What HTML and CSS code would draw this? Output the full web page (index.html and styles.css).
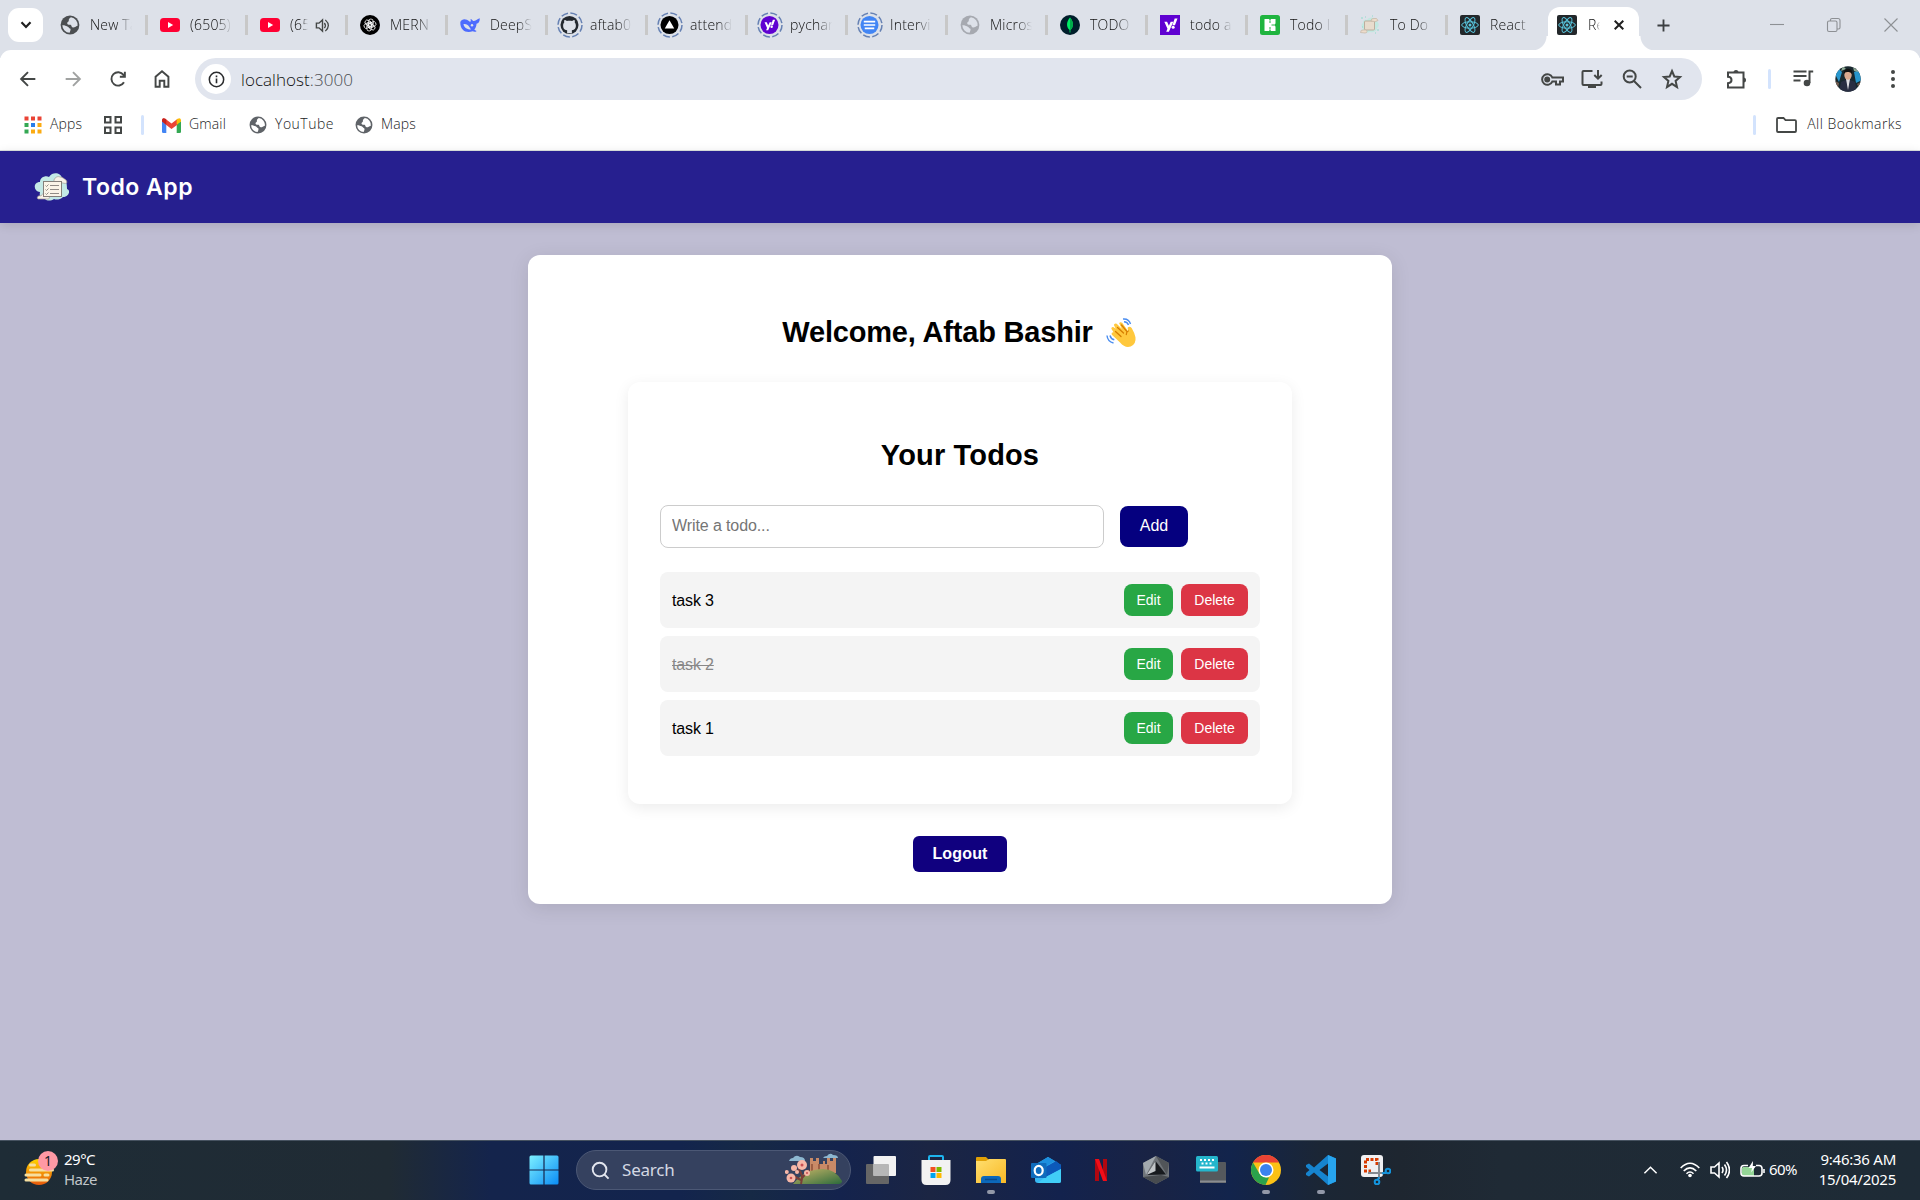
FILE: index.html
```html
<!DOCTYPE html>
<html lang="en">
<head>
<meta charset="utf-8">
<title>Todo App</title>
<link rel="stylesheet" href="styles.css">
</head>
<body>
<svg class="sprite" aria-hidden="true">
  <defs>
    <linearGradient id="g-win" x1="0" y1="0" x2="1" y2="1"><stop offset="0" stop-color="#7df0ff"/><stop offset="1" stop-color="#0a8cf5"/></linearGradient>
    <linearGradient id="g-sun" x1="0" y1="0" x2="0" y2="1"><stop offset="0" stop-color="#ffd400"/><stop offset="1" stop-color="#e8590c"/></linearGradient>
    <linearGradient id="g-hill" x1="0" y1="0" x2="1" y2="1"><stop offset="0" stop-color="#c9b567"/><stop offset="1" stop-color="#2c6b3c"/></linearGradient>
    <linearGradient id="g-folder" x1="0" y1="0" x2="1" y2="1"><stop offset="0" stop-color="#ffdf70"/><stop offset="1" stop-color="#f9b925"/></linearGradient>
    <symbol id="globe" viewBox="0 0 20 20"><circle cx="10" cy="10" r="9.4" fill="currentColor"/><path d="M11 2.2c-1.6 1-2.5 2-2.2 3.4.3 1.2-1.6 1.300-1.6 2.700 0 1 1.200 1.500 2.800 1.500 2 0 1 2.400 3 2.700 1.500.2 2.500-.9 4.600-1.700A7.700 7.700 0 0 0 11 2.200zM2.300 10.300c1.700-.4 3.500.5 5 1.200 1.600.6 1.400 1.700 2.800 2 1 .3.300 2.500-.5 4.200a7.700 7.700 0 0 1-7.300-7.400z" fill="var(--cut,#dde1e9)"/></symbol>
    <symbol id="youtube" viewBox="0 0 20 20"><rect y="3" width="20" height="14" rx="3.500" fill="#ff0033"/><path d="M8 7l5.200 3L8 13z" fill="#fff"/></symbol>
    <symbol id="openai" viewBox="0 0 20 20"><circle cx="10" cy="10" r="10" fill="#000"/><g fill="none" stroke="#fff" stroke-width=".8"><rect x="8.600" y="4" width="4.600" height="8" rx="2.300"/><rect x="8.600" y="4" width="4.600" height="8" rx="2.300" transform="rotate(60 10 10)"/><rect x="8.600" y="4" width="4.600" height="8" rx="2.300" transform="rotate(120 10 10)"/><rect x="8.600" y="4" width="4.600" height="8" rx="2.300" transform="rotate(180 10 10)"/><rect x="8.600" y="4" width="4.600" height="8" rx="2.300" transform="rotate(240 10 10)"/><rect x="8.600" y="4" width="4.600" height="8" rx="2.300" transform="rotate(300 10 10)"/></g></symbol>
    <symbol id="deepseek" viewBox="0 0 20 20"><path d="M.3 7C2 3.500 6 3.500 9.500 6.500c1.200.8 1.600-.3 1-2.500 1.400.2 2 1.500 2.800 2C15 6.500 17 4 19.800 3.200c0 3.500-1.300 5-3.300 5.500 0 2.500-1 4.500-2.200 5.700.8 1 1.800 1.200 2.300 1.500-1 1.300-3 .8-4 .3C7 18.500 0 16 .3 7z" fill="#4d6bfe"/><path d="M3.500 9c2.500-.5 4.500.8 5.500 2.500l2 3C7.500 14.500 4 13 3.500 9z" fill="#dde1e9"/><circle cx="12" cy="10.200" r="1.200" fill="#dde1e9"/></symbol>
    <symbol id="ring" viewBox="0 0 26 26"><circle cx="13" cy="13" r="12" fill="none" stroke="#6681b3" stroke-width="1.500" stroke-dasharray="7 2.425"/></symbol>
    <symbol id="github" viewBox="0 0 20 20"><circle cx="10" cy="10" r="9.500" fill="#24292f"/><path d="M7.500 18.800v-3.300c-3.300-.2-4.200-2.400-4.200-5 0-1.500.5-2.400 1.200-3.100-.3-1-.1-2 .2-2.600 1 0 1.900.5 2.500 1.100 1.800-.5 3.900-.5 5.600 0 .700-.6 1.600-1.100 2.500-1.100.4.700.5 1.700.2 2.600.8.800 1.200 1.800 1.200 3.100 0 2.600-1 4.800-4.200 5v3.300z" fill="#dde1e9"/></symbol>
    <symbol id="vercel" viewBox="0 0 20 20"><circle cx="10" cy="10" r="9.500" fill="#000"/><path d="M10 5l5 8.800H5z" fill="#fff"/></symbol>
    <symbol id="yahoo-mark" viewBox="0 0 20 20"><path d="M3.500 7h2.900l1.900 4.400L10.200 7H13l-4.700 10.500H5.500l1.300-2.900zM14.400 3.800h3l-2.700 7h-2.700z" fill="#fff"/><circle cx="12.800" cy="13" r="1.600" fill="#fff"/></symbol>
    <symbol id="yahoo-round" viewBox="0 0 20 20"><circle cx="10" cy="10" r="9.500" fill="#5f01d1"/><use href="#yahoo-mark" x="2" y="1.500" width="16" height="16"/></symbol>
    <symbol id="yahoo" viewBox="0 0 20 20"><rect width="20" height="20" fill="#5f01d1"/><use href="#yahoo-mark" x="1" y="0" width="19" height="19"/></symbol>
    <symbol id="docs" viewBox="0 0 20 20"><circle cx="10" cy="10" r="9.500" fill="#4285f4"/><path d="M4 6.500h12M4 10h12M5 13.500h10" stroke="#fff" stroke-width="1.800"/></symbol>
    <symbol id="mongo" viewBox="0 0 20 20"><circle cx="10" cy="10" r="10" fill="#001e2b"/><path d="M10 2.500c3.500 4.300 4.200 8.800.4 12.600v2.400h-.8v-2.400C5.800 11.300 6.500 6.800 10 2.500z" fill="#00ed64"/><path d="M10 2.500c3.500 4.300 4.200 8.800.4 12.600H10z" fill="#00ac4b"/></symbol>
    <symbol id="flower" viewBox="0 0 20 20"><rect width="20" height="20" rx="2.500" fill="#1fb43f"/><path d="M4.500 4H9l1 1.500L11 4h4.500v4.500L14 10l1.500 1.500V16H11l-1-1.500L9 16H4.500z" fill="#fff"/><path d="M10 5.500V8M10 12v2.500M11.500 10H14" stroke="#1fb43f" stroke-width="1"/></symbol>
    <symbol id="todo-faint" viewBox="0 0 20 20"><path d="M3 8c0-4 3-4 4-3 2-4 9-3 9 1 3 1 4 5 1 7 0 4-5 5-7 4-4 2-9-1-7-4-2-1-2-4 0-5z" fill="#c3e8e1"/><path d="M1 3h2M5 2h1M2 12h1M17 15h2M15 18h1M12 1h1" stroke="#8fdccb" stroke-width="1"/><rect x="4.500" y="6" width="10" height="9" rx="1" fill="#e8dccd" stroke="#bcae9e"/><path d="M11 6q0-3 3-2.500 3-1 4 2-2 2-7 .5zM.5 17.500q0-3 3-2.500 3-1 3.500 1.500 0 1.500-2 1.500z" fill="#eddccb" stroke="#c3b5a4" stroke-width=".7"/></symbol>
    <symbol id="react" viewBox="0 0 20 20"><rect width="20" height="20" rx="2" fill="#23272a"/><g fill="none" stroke="#58c4dc" stroke-width="1"><ellipse cx="10" cy="10" rx="8.300" ry="3.200"/><ellipse cx="10" cy="10" rx="8.300" ry="3.200" transform="rotate(60 10 10)"/><ellipse cx="10" cy="10" rx="8.300" ry="3.200" transform="rotate(120 10 10)"/></g><circle cx="10" cy="10" r="1.500" fill="#58c4dc"/></symbol>
    <symbol id="todo-logo" viewBox="0 0 36 30"><path d="M6 20C-1 19-1 10 6 10c0-5 6-7 9-5 4-6 12-4 13 1 5 1 5 8 5 11 4 1 2 8-4 8-3 3-7 3-9 2-3 2-7 2-9 0-4 0-6-3-5-7z" fill="#c3e9e6"/><path d="M20 8c1-3 4-4 6-3 3 0 4 2 6 3 2 3 0 4-3 3l-9-1zM4 27c-2-2 1-4 3-3 1-3 5-3 6 0 3 0 3 3 1 3z" fill="#f7f2e8" stroke="#a49b92" stroke-width=".7"/><rect x="9.500" y="9.500" width="18" height="15" fill="#fbf5e8" stroke="#85807a"/><path d="M11.500 13.500l1 1 2-2M11.500 17.500l1 1 2-2M11.500 21.500l1 1 2-2M16 13.500h9M16 17.500h9M16 21.500h9" fill="none" stroke="#85807a" stroke-width=".9"/></symbol>
    <symbol id="i-restore" viewBox="0 0 16 16"><rect x="1.500" y="4" width="9.500" height="10.500" rx="1.500"/><path d="M4.500 4V2.800Q4.500 1.500 6 1.500h6q2 0 2 2v7q0 1.500-1.500 1.500H11"/></symbol>
  </defs>
</svg>

<div class="browser">
  <header class="tabstrip">
    <button class="tab-search"><svg width="12" height="8" viewBox="0 0 12 8"><path d="M1.500 1.300L6 6l4.500-4.700" fill="none" stroke="#1f1f1f" stroke-width="2.200"/></svg></button>
    <nav class="tabs">
      <div class="tab"><svg class="fav dark"><use href="#globe"/></svg><span>New Tab</span></div>
      <div class="tab"><svg class="fav"><use href="#youtube"/></svg><span>(6505)</span></div>
      <div class="tab audio"><svg class="fav"><use href="#youtube"/></svg><span>(6505)</span><svg class="sound" viewBox="0 0 16 16"><path d="M1.500 5.500h2.700L8 2v12l-3.800-3.500H1.500z" fill="none" stroke="#444746" stroke-width="1.500"/><path d="M10 5.300q2.200 2.700 0 5.400M11 2q6.500 6 0 12" fill="none" stroke="#444746" stroke-width="1.400"/></svg></div>
      <div class="tab"><svg class="fav"><use href="#openai"/></svg><span>MERN</span></div>
      <div class="tab"><svg class="fav"><use href="#deepseek"/></svg><span>DeepS</span></div>
      <div class="tab asleep"><svg class="fav"><use href="#github"/></svg><svg class="ring"><use href="#ring"/></svg><span>aftab0</span></div>
      <div class="tab asleep"><svg class="fav"><use href="#vercel"/></svg><svg class="ring"><use href="#ring"/></svg><span>attend</span></div>
      <div class="tab asleep"><svg class="fav"><use href="#yahoo-round"/></svg><svg class="ring"><use href="#ring"/></svg><span>pychar</span></div>
      <div class="tab asleep"><svg class="fav"><use href="#docs"/></svg><svg class="ring"><use href="#ring"/></svg><span>Intervi</span></div>
      <div class="tab"><svg class="fav pale"><use href="#globe"/></svg><span>Micros</span></div>
      <div class="tab"><svg class="fav"><use href="#mongo"/></svg><span>TODO</span></div>
      <div class="tab"><svg class="fav"><use href="#yahoo"/></svg><span>todo a</span></div>
      <div class="tab"><svg class="fav"><use href="#flower"/></svg><span>Todo l</span></div>
      <div class="tab"><svg class="fav"><use href="#todo-faint"/></svg><span>To Do</span></div>
      <div class="tab last"><svg class="fav"><use href="#react"/></svg><span>React</span></div>
      <div class="tab active"><svg class="fav"><use href="#react"/></svg><span>Re</span><svg class="close" viewBox="0 0 10 10"><path d="M.7.7l8.600 8.600M9.300.7L.7 9.300" stroke="#1f1f1f" stroke-width="2"/></svg></div>
    </nav>
    <svg class="new-tab" viewBox="0 0 14 14"><path d="M7 .5v13M.5 7h13" stroke="#3c3f42" stroke-width="2"/></svg>
    <div class="window-controls">
      <svg viewBox="0 0 16 16"><path d="M1 7.500h14"/></svg>
      <svg viewBox="0 0 16 16"><use href="#i-restore"/></svg>
      <svg viewBox="0 0 16 16"><path d="M1.500 1.500l13 13M14.500 1.500l-13 13"/></svg>
    </div>
  </header>

  <div class="toolbar">
    <div class="nav-buttons">
      <svg viewBox="0 0 24 24"><path d="M20 12H5M12 4.500L4.500 12l7.500 7.500"/></svg>
      <svg class="off" viewBox="0 0 24 24"><path d="M4 12h15M12 4.500l7.500 7.500-7.500 7.500"/></svg>
      <svg viewBox="0 0 24 24"><path d="M18.500 15.500A7.300 7.300 0 1 1 18 7.500l1 1.500M19.500 4v5.500H14"/></svg>
      <svg viewBox="0 0 24 24"><path d="M5 20.500V9.500L12 3.500l7 6v11h-4.500v-6.500h-5v6.500z"/></svg>
    </div>
    <div class="omnibox">
      <span class="site-info"><svg viewBox="0 0 18 18"><circle cx="9" cy="9" r="7.600" fill="none" stroke="#2a2b2d" stroke-width="1.600"/><path d="M9 8v5M9 4.800v1.800" stroke="#2a2b2d" stroke-width="1.700"/></svg></span>
      <span class="url">localhost<i>:3000</i></span>
      <div class="omni-actions">
        <svg viewBox="0 0 24 24"><path d="M12.300 10.400A5.300 5.300 0 1 0 12.300 14.600H16v3h4v-3h3v-4.200z"/><circle cx="7.200" cy="12.500" r="2" fill="#444746"/></svg>
        <svg viewBox="0 0 24 24"><path d="M12.500 4H3.500Q2.500 4 2.500 5v12q0 1 1 1h17q1 0 1-1v-2.500M18 3v8M14.300 8l3.700 3.700L21.700 8"/><path d="M8 18h8v3H8z" fill="#444746" stroke="none"/></svg>
        <svg viewBox="0 0 24 24"><circle cx="9.700" cy="9.500" r="6"/><path d="M14 14l7 7M6.700 9.500h6"/></svg>
        <svg viewBox="0 0 24 24"><path d="M12 4l2.300 5.500 5.700.5-4.400 3.900 1.400 6.100L12 16.800 7 20l1.400-6.100L4 10l5.700-.5z"/></svg>
      </div>
    </div>
    <svg class="ext" viewBox="0 0 24 24"><path d="M4 5.500h15.500v15H4v-4.300q3.500-.2 3.500-3.200T4 9.800z"/><path d="M9.500 5.500a2.500 2.500 0 0 1 5 0zM19.500 10.500a2.300 2.300 0 0 1 0 5z" fill="#444746" stroke="none"/></svg>
    <span class="divider"></span>
    <svg class="media" viewBox="0 0 24 24"><path d="M2.500 4.500h13M2.500 9h13M2.500 13.500h7M18.500 16V4.500h3.700"/><circle cx="16" cy="16" r="3.300" fill="#444746" stroke="none"/></svg>
    <svg class="avatar" viewBox="0 0 26 26"><clipPath id="av"><circle cx="13" cy="13" r="12.700"/></clipPath><g clip-path="url(#av)"><path fill="#19282e" d="M0 0h26v26H0z"/><path d="M0 8l4-5 3 3-3 10zM19 6l5-2 3 10-6 3z" fill="#2897cd"/><path d="M8 0l3 3-5 2zM18 1l6 5-5-1z" fill="#8fab95"/><path d="M0 15l4 2-1 5zM26 16l-4 2 2 4z" fill="#755d50"/><path d="M4 26l2-10 7-3 7 3 2 10z" fill="#292e42"/><path d="M11 13h4l-2 11z" fill="#e0e0e4"/><ellipse cx="13" cy="9" rx="3.700" ry="4.800" fill="#dba98e"/><path d="M9 8Q8 3 13 2.700 18 3 17 8 15 5.500 13 6 10 5.500 9 8z" fill="#111"/></g></svg>
    <svg class="more" viewBox="0 0 6 20"><circle cx="3" cy="3" r="2"/><circle cx="3" cy="10" r="2"/><circle cx="3" cy="17" r="2"/></svg>
  </div>

  <div class="bookmarks">
    <a class="apps"><svg width="18" height="18" viewBox="0 0 18 18"><path d="M.5.5h4v4h-4zM7 .5h4v4H7zM13.500.5h4v4h-4z" fill="#ea4335"/><path d="M.5 7h4v4h-4zM.5 13.500h4v4h-4z" fill="#34a853"/><path d="M7 7h4v4H7z" fill="#2a7de9"/><path d="M13.500 7h4v4h-4zM7 13.500h4v4H7zM13.500 13.500h4v4h-4z" fill="#fbab12"/></svg><span>Apps</span></a>
    <svg class="grid" viewBox="0 0 18 18"><path d="M1 1h5.500v5.500H1zM11.500 1H17v5.500h-5.500zM1 11.500h5.500V17H1zM11.500 11.500H17V17h-5.500z" fill="none" stroke="#444746" stroke-width="2"/></svg>
    <span class="divider"></span>
    <a class="gmail"><svg width="19" height="15" viewBox="0 0 19 15"><path d="M0 3v10.700Q0 15 1.300 15H4.300V6z" fill="#4285f4"/><path d="M19 3v10.700q0 1.300-1.300 1.300h-3V6z" fill="#34a853"/><path d="M0 3.200V2Q.5-.8 3.300.7L9.500 5.500 15.700.7v5.700L9.500 11 4.300 7z" fill="#ea4335"/><path d="M14.700 1.500l1-.8Q18.500-.8 19 2v1.500l-4.300 3.300z" fill="#fbbc04"/><path d="M0 2Q.5-.8 3.300.7l1 .8v5.300L0 3.500z" fill="#c5221f"/></svg><span>Gmail</span></a>
    <a class="yt"><svg width="18" height="18"><use href="#globe"/></svg><span>YouTube</span></a>
    <a class="maps"><svg width="18" height="18"><use href="#globe"/></svg><span>Maps</span></a>
    <div class="all"><span class="divider"></span><svg width="21" height="16" viewBox="0 0 21 16"><path d="M1 14V2q0-1 1-1h5.500l2 2.200H19q1 0 1 1V14q0 1-1 1H2q-1 0-1-1z" fill="none" stroke="#444746" stroke-width="1.800"/></svg><span class="label">All Bookmarks</span></div>
  </div>
</div>

<main class="page">
  <header class="navbar"><svg width="36" height="30"><use href="#todo-logo"/></svg><span>Todo App</span></header>
  <section class="home">
    <h1>Welcome, Aftab Bashir <svg viewBox="0 0 32 32"><path d="M12.500 25.500L3.800 17.200q-.8-2.500 1.800-2.500L3.300 11q0-2.300 2.500-1.600l2.200 1.700-2-4q.5-2.500 3-1.300l5.500 5.500-3-6q1-2.200 3.200-.5l6.300 8.700-.6-3.500q2-2.500 4.300.3 3 5 4 9.700 1 7-5 9.700-6 2-11.200-4.200z" transform="translate(2.200 1.300) scale(.95)" fill="#ffc83d"/><path d="M9.500 14.500l5.500 5M11.500 10.500l6 5.500M15.500 8l5 6M22.300 14q-2 .8-2 3.500" fill="none" stroke="#d67d00" stroke-width="1.300" stroke-linecap="round"/><path d="M17 2q6-.5 7.500 5M18 4.800q3.500.2 4.500 3.200M1 18.500q.5 6 6.500 7.500M4 18.500q.8 3.500 4.300 4.300" fill="none" stroke="#4a8df0" stroke-width="1.400"/></svg></h1>
    <div class="todos">
      <h2>Your Todos</h2>
      <form class="todo-form"><input type="text" placeholder="Write a todo..."><button type="button">Add</button></form>
      <ul>
        <li><span>task 3</span><button class="edit">Edit</button><button class="delete">Delete</button></li>
        <li class="done"><span>task 2</span><button class="edit">Edit</button><button class="delete">Delete</button></li>
        <li><span>task 1</span><button class="edit">Edit</button><button class="delete">Delete</button></li>
      </ul>
    </div>
    <button class="logout">Logout</button>
  </section>
</main>

<footer class="taskbar">
  <div class="weather">
    <svg width="36" height="36" viewBox="0 0 36 36"><circle cx="15" cy="22" r="13" fill="url(#g-sun)"/><path d="M6.500 15h4M6.500 20h22M2 25h14M21 25h3M2 30h21" stroke="#f6dfa0" stroke-width="3" stroke-linecap="round"/><circle cx="24" cy="11" r="10" fill="#ff99a4"/><text x="24" y="16" text-anchor="middle" class="badge-text">1</text></svg>
    <div><b>29°C</b><span>Haze</span></div>
  </div>
  <div class="dock">
    <svg class="app start" viewBox="0 0 30 30"><path d="M.5 2Q.5.500 2 .5h12.400v13.900H.5zM15.600.5H28q1.500 0 1.500 1.500v12.400H15.600zM.5 15.600h13.900v13.900H2Q.5 29.500.5 28zM15.600 15.600h13.900V28q0 1.500-1.500 1.500H15.600z" fill="url(#g-win)"/></svg>
    <div class="search"><svg class="lens" viewBox="0 0 20 20"><circle cx="9" cy="9" r="7.200"/><path d="M14.200 14.200l4.300 4.300"/></svg><span>Search</span>
      <svg class="scene" viewBox="0 0 58 34"><path d="M4 8q1-3 4-3 3-4 7-1 5 0 5 4zM38 5q1-2 4-2 3-4 6-1 5 0 5 3z" fill="#8db7d0"/><path d="M25 20V5h3v3h3V5h3v6h4V8h2v3h2V5h3v3h3V5h3v15z" fill="#c98a67"/><path d="M34 11v8M43 12v7M27 11v7" stroke="#8f5039" stroke-width="1.500"/><path d="M8 31q12-15 30-15 12 0 19 12v1q-1 2-3 2z" fill="url(#g-hill)"/><path d="M16 31q3-10-3-15M17 25l7-8M16 27l-8-4" stroke="#7b3d37" stroke-width="2" fill="none"/><g fill="#f7b7a7"><circle cx="17" cy="12" r="5"/><circle cx="9" cy="15" r="3"/><circle cx="6" cy="25" r="4.500"/><circle cx="22" cy="20" r="3"/><circle cx="1.800" cy="19" r="2"/><circle cx="12" cy="19" r="2"/></g><g fill="#c94f52"><circle cx="17" cy="12" r="1.500"/><circle cx="6" cy="25" r="1.300"/><circle cx="22" cy="20" r="1"/></g></svg>
    </div>
    <svg class="app" viewBox="0 0 30 30"><rect y="9" width="23" height="20" rx="1" fill="#666"/><rect x="7.500" y="1" width="22.500" height="20" rx="1" fill="#f2f2f2"/><path d="M7.500 9H22q1 0 1 1v11H7.500z" fill="#b7b7b7"/></svg>
    <svg class="app" viewBox="0 0 30 30"><path d="M8 6V2q0-1 1-1h12q1 0 1 1v4" fill="none" stroke="#1db4ee" stroke-width="2"/><path d="M.5 5h29v20q0 5-5 5h-19q-5 0-5-5z" fill="#f2f2f2"/><path d="M9.500 12h5v5h-5z" fill="#f25022"/><path d="M15.500 12h5v5h-5z" fill="#7fba00"/><path d="M9.500 18h5v5h-5z" fill="#00a4ef"/><path d="M15.500 18h5v5h-5z" fill="#ffb900"/></svg>
    <div class="app running"><svg viewBox="0 0 30 30"><path d="M0 3q0-1 1-1h9l3 3v5H0z" fill="#e0a006"/><path d="M0 6h10l3-2h16q1 0 1 1v23H0z" fill="url(#g-folder)"/><path d="M5 28v-4q0-3 3-3h14q3 0 3 3v4z" fill="#0c68ba"/><path d="M9 24.500h12" stroke="#084b8c" stroke-width="1.500"/></svg></div>
    <svg class="app" viewBox="0 0 30 30"><path d="M4 10L17 2l13 8v16q0 2-2 2H7q-3 0-3-3z" fill="#39b8f2"/><path d="M5 9L17 2l7 4L9 15z" fill="#1c8fdf"/><path d="M9 15l16-9 5 4v4L13 23z" fill="#0c59ba"/><path d="M13 23l17-9v12q0 2-2 2H7z" fill="#41cef7"/><rect y="8" width="15.500" height="15" rx="1" fill="#0f6cbd"/><ellipse cx="7.700" cy="15.500" rx="4" ry="4.600" fill="none" stroke="#fff" stroke-width="2.200"/></svg>
    <svg class="app" viewBox="0 0 30 30"><path d="M9 4h4v22H9zM17 4h4v22h-4z" fill="#b00710"/><path d="M9 4h4l8 22h-4z" fill="#f20d18"/></svg>
    <svg class="app" viewBox="0 0 30 30"><path d="M15 1l13 7v14l-13 7-13-7V8z" fill="#70757a"/><path d="M15 1L2 8l3 12z" fill="#a2a9ae"/><path d="M15 1l13 7-2 12z" fill="#515559"/><path d="M14.500 6L25 19.500 5.500 20z" fill="#171a1e"/><path d="M2 22l13 7 13-7-8-2z" fill="#474b4f"/><path d="M14.500 6L5.500 20l9-4z" fill="#c1c5c8"/></svg>
    <svg class="app" viewBox="0 0 30 30"><path d="M4 7h25q1 0 1 1v20H4z" fill="#55595d"/><path d="M4 26.500h26" stroke="#8a8d91" stroke-width="2"/><rect width="22" height="15.500" y="1" rx="1.500" fill="#25b6cc"/><path d="M4 5h2M8 5h2M12 5h2M16 5h2M5.500 8.500h2M9.500 8.500h2M13.500 8.500h2M3.500 12.500h15" stroke="#fff" stroke-width="1.800"/></svg>
    <div class="app running"><svg viewBox="0 0 30 30"><circle cx="15" cy="15" r="15" fill="#fbc116"/><path d="M2 7.500A15 15 0 0 1 28 7.500H15z" fill="#ea4335"/><path d="M2 7.500L8.500 18.800 15 22.500h3L14.500 30A15 15 0 0 1 2 7.500z" fill="#2ba24c"/><circle cx="15" cy="15" r="7.500" fill="#fff"/><circle cx="15" cy="15" r="6" fill="#3b82ee"/></svg></div>
    <div class="app running"><svg viewBox="0 0 30 30"><path d="M22 0l8 3.500v23L22 30 8 17.500 3 21.500 0 20v-2l3.500-3L0 12v-2l3-1.500 5 4zM22 8.500L13.500 15l8.500 6.500z" fill="#1684cf" fill-rule="evenodd"/><path d="M22 0l8 3.500v23L22 30z" fill="#27a4ee"/></svg></div>
    <svg class="app" viewBox="0 0 30 30"><rect width="22" height="22" rx="3" fill="#f0f0f2"/><path d="M16 10V4.500H4.500V16H10" fill="none" stroke="#d83b01" stroke-width="3" stroke-dasharray="3 1.500"/><path d="M18 7v11H7M18 18h7M18 18v6" fill="none" stroke="#858a90" stroke-width="2"/><circle cx="27" cy="16" r="2.300" fill="none" stroke="#1394dd" stroke-width="2"/><circle cx="16" cy="27" r="2.300" fill="none" stroke="#1394dd" stroke-width="2"/><path d="M21 18.500l4-1M18 22l-1.200 3" stroke="#1394dd" stroke-width="2"/></svg>
  </div>
  <div class="tray">
    <svg class="up" viewBox="0 0 16 10"><path d="M1.500 8.500L8 2l6.500 6.500"/></svg>
    <svg class="wifi" viewBox="0 0 20 16"><path d="M.7 6Q10-3.500 19.300 6M3.700 9q6.300-6.300 12.600 0M6.500 11.700q3.500-3.500 7 0"/><circle cx="10" cy="13.500" r="1.800" fill="#fff" stroke="none"/></svg>
    <svg class="vol" viewBox="0 0 20 18"><path d="M1 6h3.500L9 2v14l-4.500-4H1zM12 6q2 3 0 6M14.500 3.500q4 5.500 0 11M16.500 1q6 8 0 16"/></svg>
    <svg class="bat" viewBox="0 0 25 18"><path d="M3 6h11v9H4q-2 0-2-2V7z" fill="#94d596" stroke="none"/><path d="M8 4.500H4q-3 0-3 3V12q0 3 3 3h15q3 0 3-3V7.500q0-3-3-3h-3M24 8v4"/><path d="M13 0L8.500 7H12l-.8 4.500L16 5h-3.200z" fill="#fff" stroke="none"/></svg>
    <span class="pct">60%</span>
    <div class="clock"><span>9:46:36 AM</span><span>15/04/2025</span></div>
  </div>
</footer>
</body>
</html>
```
FILE: styles.css
```css
* { box-sizing: border-box; }
html, body { margin: 0; height: 100%; overflow: hidden; }
body { display: flex; flex-direction: column; font-family: "Liberation Sans", Arial, sans-serif; color: #000; background: #bfbdd3; }
svg { display: block; flex: none; }
button { font-family: inherit; border: 0; }
.sprite { position: absolute; width: 0; height: 0; }

/* Browser chrome */
.browser { height: 151px; flex: none; background: #fff; border-bottom: 1px solid #dce1e0; font-family: "Open Sans", "Noto Sans", sans-serif; font-weight: 300; color: #111; }
.tabstrip { display: flex; align-items: center; height: 58px; margin-bottom: -8px; padding-bottom: 8px; background: #dde1e9; }
.tab-search { width: 35px; height: 34px; margin-left: 8px; padding: 0; border-radius: 11px; background: #fff; display: grid; place-items: center; }
.tabs { display: flex; align-items: center; height: 50px; margin-left: 5px; }
.tab { display: flex; align-items: center; position: relative; width: 100px; height: 20px; padding-left: 12px; border-right: 3px solid #c8c8c8; font-size: 14px; }
.tab.last { border-color: transparent; }
.tab span { width: 42px; margin-left: 10px; overflow: hidden; white-space: nowrap; letter-spacing: .2px; line-height: 20px; -webkit-mask-image: linear-gradient(90deg, #000 65%, transparent); mask-image: linear-gradient(90deg, #000 65%, transparent); }
.fav { width: 20px; height: 20px; }
.dark { color: #4b4e51; }
.pale { color: #a6a9b0; }
.tab .ring { position: absolute; left: 9px; top: -3px; width: 26px; height: 26px; }
.asleep .fav { width: 19px; margin-right: 1px; }
.tab.audio span { width: 18px; }
.sound { width: 15px; height: 15px; margin-left: 7px; }
.tab.active { width: 91px; height: 43px; margin: 7px 0 0 0; padding: 0 0 7px 9px; border: 0; border-radius: 12px 12px 0 0; background: #fff; }
.tab.active::before, .tab.active::after { content: ""; position: absolute; bottom: 0; width: 16px; height: 14px; }
.tab.active::before { left: -16px; background: radial-gradient(circle at 0 0, transparent 14px, #fff 15px); }
.tab.active::after { right: -16px; background: radial-gradient(circle at 100% 0, transparent 14px, #fff 15px); }
.tab.active span { width: 12px; margin-left: 11px; }
.close { width: 10px; height: 10px; margin-left: 14px; }
.new-tab { width: 13px; height: 13px; margin-left: 18px; }
.window-controls { display: flex; gap: 41px; margin-left: auto; margin-right: 21px; }
.window-controls svg { width: 16px; height: 16px; fill: none; stroke: #8d9094; stroke-width: 1.1; }
.toolbar { display: flex; align-items: center; height: 50px; padding: 8px 0 0 6px; position: relative; border-radius: 11px 11px 0 0; background: #fff; }
.nav-buttons { display: flex; align-items: center; width: 189px; }
.nav-buttons svg { width: 22px; height: 22px; margin: 0 11.800px 0 11px; fill: none; stroke: #444746; stroke-width: 2.100; }
.nav-buttons .off { opacity: .5; }
.omnibox { display: flex; align-items: center; width: 1507px; height: 42px; padding: 0 10px 0 6px; border-radius: 21px; background: #e1e5ee; }
.site-info { display: grid; place-items: center; width: 30px; height: 30px; border-radius: 50%; background: #fff; }
.site-info svg { width: 17px; height: 17px; }
.url { margin-left: 10px; font-size: 17px; letter-spacing: .05px; }
.url i { font-style: normal; color: #4a4d51; }
.omni-actions { display: flex; margin-left: auto; }
.omni-actions svg, .ext, .media { width: 24px; height: 24px; margin: 0 8px; fill: none; stroke: #444746; stroke-width: 2; }
.toolbar .ext { margin: 0 20px 0 22px; }
.divider { flex: none; width: 3px; height: 20px; border-radius: 2px; background: #d3e3fd; }
.toolbar .media { margin: 0 20px 0 20px; }
.avatar { width: 26px; height: 26px; }
.more { width: 6px; height: 20px; margin-left: 29px; fill: #444746; }
.bookmarks { display: flex; align-items: center; height: 50px; padding: 0 18px 0 24px; font-size: 14px; line-height: 18px; letter-spacing: .15px; color: #1b1c1d; --cut: #fff; }
.bookmarks a { display: flex; align-items: center; gap: 8px; color: #5f6368; }
.bookmarks a span { color: #1b1c1d; }
.bookmarks span:not(.divider) { padding-bottom: 2px; }
.bookmarks .apps { width: 80px; }
.grid { width: 18px; height: 18px; }
.bookmarks > .divider { margin: 0 18px 0 19px; }
.bookmarks .gmail { width: 87px; }
.bookmarks .yt { width: 106px; letter-spacing: .5px; }
.all { display: flex; align-items: center; gap: 20px; margin-left: auto; letter-spacing: .45px; }
.all .label { margin-left: -10px; white-space: nowrap; }

/* Application page */
.page { flex: 1; display: flex; flex-direction: column; align-items: center; min-height: 0; background: #bfbdd3; }
.navbar { display: flex; align-items: center; gap: 12px; width: 100%; height: 72px; flex: none; padding-left: 34px; background: #261f8f; color: #fff; font: 600 23px Inter, "Open Sans", sans-serif; box-shadow: 0 2px 10px rgba(0,0,0,.12); letter-spacing: .5px; }
.home { display: flex; flex-direction: column; align-items: center; width: 864px; height: 649px; margin-top: 32px; padding-top: 59px; border-radius: 12px; background: #fff; box-shadow: 0 4px 20px rgba(0,0,0,.1); }
.home h1 { display: flex; align-items: center; height: 37px; margin: 0 0 31px; font-size: 29px; line-height: 37px; letter-spacing: -.18px; }
.home h1 svg { width: 32px; height: 32px; margin-left: 13px; }
.todos { width: 664px; height: 422px; padding: 54px 32px 0; border-radius: 12px; background: #fff; box-shadow: 0 4px 15px rgba(0,0,0,.08); }
.todos h2 { height: 38px; margin: 0 0 30px; text-align: center; font-size: 29px; line-height: 38px; letter-spacing: .15px; }
.todo-form { display: flex; align-items: center; gap: 16px; height: 44px; }
.todo-form input { width: 444px; height: 43px; padding: 0 11px; border: 1px solid #ccc; border-radius: 8px; font: 16px "Liberation Sans", Arial, sans-serif; letter-spacing: -.1px; }
.todo-form input::placeholder { color: #757575; }
.todo-form button { width: 68px; height: 41px; border-radius: 8px; background: #05007f; color: #fff; font-size: 16px; }
.todos ul { display: flex; flex-direction: column; gap: 8px; margin: 24px 0 0; padding: 0; list-style: none; }
.todos li { display: flex; align-items: center; gap: 8px; height: 56px; padding: 0 12px; border-radius: 8px; background: #f4f4f4; font-size: 16px; }
.todos li span { margin-right: auto; padding-top: 1px; letter-spacing: -.15px; }
.done span { color: #888; text-decoration: line-through; }
.todos li button { height: 32px; padding: 0; border-radius: 8px; color: #fff; font-size: 14px; }
.todos li .edit { width: 49px; background: #28a745; }
.todos li .delete { width: 67px; background: #dc3545; }
.logout { width: 94px; height: 36px; margin-top: 32px; padding: 0; border-radius: 6px; background: #10007f; color: #fff; font-size: 16px; font-weight: 700; letter-spacing: .15px; }

/* Windows taskbar */
.taskbar { display: flex; align-items: center; height: 60px; padding-bottom: 1px; flex: none; border-top: 1px solid #465260; background: linear-gradient(90deg, #1e2c36 0, #202b34 390px, #14244c 490px, #13244d 680px, #162945 750px, #14234d 840px, #1b2543 930px, #13224d 1060px, #192344 1150px, #12244c 1230px, #1b2635 1320px, #1e2630 1400px, #1f2a35 1500px, #1e2b36 100%); color: #fff; font: 15px/20px "Noto Sans", sans-serif; }
.weather { display: flex; align-items: center; gap: 3px; width: 529px; padding-left: 24px; }
.weather > svg { margin-top: -5px; }
.weather div, .clock { display: flex; flex-direction: column; padding-bottom: 3px; }
.weather div { margin-left: 1px; letter-spacing: -.5px; }
.weather b { font-weight: 400; }
.weather div span { color: #c1c6ca; }
.badge-text { font: 14px "Noto Sans", sans-serif; fill: #16202a; }
.dock { display: flex; align-items: center; gap: 25px; }
.app { position: relative; width: 30px; height: 30px; }
.app svg { width: 30px; height: 30px; }
.running::after { content: ""; position: absolute; left: 11px; top: 35px; width: 8px; height: 4px; border-radius: 2px; background: #9298a8; }
.search { display: flex; align-items: center; width: 275px; height: 40px; margin: 0 -10px 0 -8px; padding: 0 7px 0 14px; border: 1px solid #4c5875; border-radius: 20px; background: #35415f; font-size: 17px; letter-spacing: -.2px; color: #d4d8e3; }
.lens { width: 19px; height: 19px; margin-right: 12px; fill: none; stroke: #e2e5ee; stroke-width: 2; }
.scene { width: 58px; height: 34px; margin-left: auto; }
.tray { display: flex; align-items: center; margin-left: auto; padding-right: 24px; }
.tray svg { fill: none; stroke: #fff; stroke-width: 1.600; }
.up { width: 15px; height: 10px; margin-right: 22px; }
.wifi { width: 20px; height: 16px; margin-right: 10px; }
.vol { width: 20px; height: 18px; margin-right: 10px; }
.bat { width: 25px; height: 18px; margin-right: 4px; }
.pct { width: 29px; letter-spacing: -.6px; padding-bottom: 2px; }
.clock { width: 98px; align-items: flex-end; white-space: nowrap; letter-spacing: -.25px; }
```
